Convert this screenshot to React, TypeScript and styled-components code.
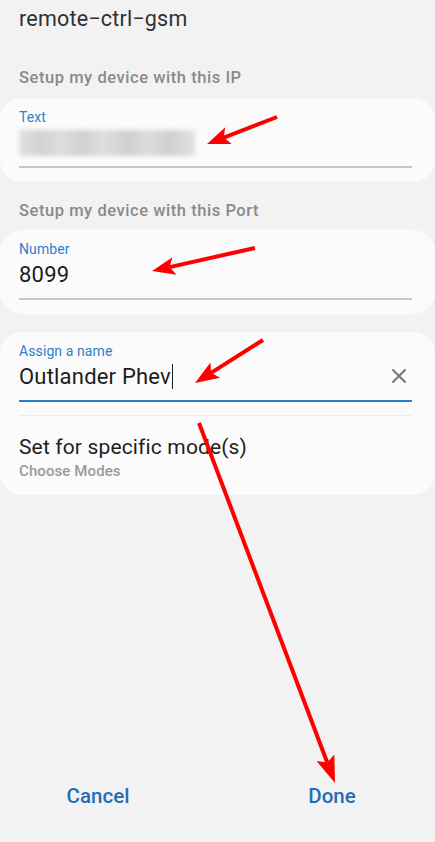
import React from "react";
import styled, { createGlobalStyle } from "styled-components";

const Global = createGlobalStyle`
  html, body { margin: 0; padding: 0; background: #f2f2f2; }
  body { font-family: Roboto, "Noto Sans", "Liberation Sans", sans-serif; }
  * { box-sizing: border-box; }
`;

const Page = styled.div`
  position: relative;
  width: 435px;
  min-height: 842px;
  display: flex;
  flex-direction: column;
  background: #f2f2f2;
  overflow: hidden;
`;

const Title = styled.div`
  padding: 5px 19px 0;
  font-size: 21.5px;
  letter-spacing: 0.2px;
  line-height: 28px;
  color: #303030;
  font-weight: 400;
`;

const SectionLabel = styled.div<{ $top: number }>`
  margin-top: ${(p) => p.$top}px;
  padding: 0 19px;
  font-size: 16.5px;
  letter-spacing: 0.55px;
  line-height: 20px;
  font-weight: 500;
  color: #8a8a8a;
`;

const Card = styled.div<{ $top: number }>`
  margin-top: ${(p) => p.$top}px;
  background: #fbfbfb;
  border-radius: 22px;
  padding: 10px 23px 14px 19px;
  display: flex;
  flex-direction: column;
`;

const FieldLabel = styled.div`
  font-size: 14px;
  letter-spacing: 0.1px;
  line-height: 18px;
  color: #2f7fc9;
`;

const ValueRow = styled.div`
  display: flex;
  align-items: center;
  height: 32px;
  font-size: 22px;
  letter-spacing: 0.2px;
  color: #1c1c1c;
`;

const Value = styled.span`
  flex: 1;
  display: flex;
  align-items: center;
`;

const Blurred = styled.span`
  display: block;
  width: 176px;
  height: 26px;
  margin-top: 2px;
  background: linear-gradient(
    90deg,
    #e0e0e0 0%, #d2d2d2 12%, #dddddd 24%, #d0d0d0 36%, #dedede 48%,
    #cfcfcf 62%, #dcdcdc 74%, #d0d0d0 86%, #e2e2e2 100%
  );
  filter: blur(2px);
`;

const Caret = styled.span`
  display: inline-block;
  width: 1.5px;
  height: 25px;
  margin-left: 1px;
  background: #222;
`;

const Underline = styled.div<{ $active?: boolean }>`
  margin-top: 8px;
  height: 2px;
  background: ${(p) => (p.$active ? "#2b7dc9" : "#c6c6c6")};
`;

const Divider = styled.div`
  margin-top: 13px;
  height: 1px;
  background: #ececec;
`;

const OptionTitle = styled.div`
  margin-top: 18px;
  font-size: 21px;
  letter-spacing: 0.15px;
  line-height: 26px;
  color: #1e1e1e;
`;

const OptionSub = styled.div`
  margin-top: 1px;
  font-size: 15px;
  letter-spacing: 0.1px;
  line-height: 20px;
  font-weight: 500;
  color: #9a9a9a;
`;

const ClearButton = styled.span`
  width: 24px;
  height: 24px;
  display: flex;
  align-items: center;
  justify-content: center;
  margin-right: 1px;
`;

const Footer = styled.div`
  margin-top: auto;
  padding-bottom: 34px;
  display: grid;
  grid-template-columns: 196px 196px;
  column-gap: 38px;
`;

const FooterButton = styled.div`
  text-align: center;
  font-size: 20.5px;
  line-height: 24px;
  font-weight: 500;
  color: #1f6fb8;
`;

const Overlay = styled.svg`
  position: absolute;
  left: 0;
  top: 0;
  width: 435px;
  height: 842px;
  pointer-events: none;
`;

type ArrowDef = { x1: number; y1: number; x2: number; y2: number; len: number; half: number };

const arrows: ArrowDef[] = [
  { x1: 277, y1: 117, x2: 207, y2: 144, len: 23, half: 9 },
  { x1: 255, y1: 248, x2: 152, y2: 271, len: 23, half: 9 },
  { x1: 263, y1: 340, x2: 195, y2: 383, len: 24, half: 9 },
  { x1: 199, y1: 423, x2: 335, y2: 783, len: 27, half: 9.5 },
];

function Arrow({ a }: { a: ArrowDef }) {
  const dx = a.x2 - a.x1;
  const dy = a.y2 - a.y1;
  const L = Math.hypot(dx, dy);
  const ux = dx / L;
  const uy = dy / L;
  const bx = a.x2 - ux * a.len;
  const by = a.y2 - uy * a.len;
  const px = -uy * a.half;
  const py = ux * a.half;
  const nx = a.x2 - ux * (a.len - 5);
  const ny = a.y2 - uy * (a.len - 5);
  const pts = `${a.x2},${a.y2} ${bx + px},${by + py} ${nx},${ny} ${bx - px},${by - py}`;
  return (
    <g>
      <line x1={a.x1} y1={a.y1} x2={nx} y2={ny} stroke="#ff0000" strokeWidth={4} />
      <polygon points={pts} fill="#ff0000" />
    </g>
  );
}

export default function App() {
  return (
    <>
      <Global />
      <Page>
        <Title>remote−ctrl−gsm</Title>

        <SectionLabel $top={35}>Setup my device with this IP</SectionLabel>
        <Card $top={10}>
          <FieldLabel>Text</FieldLabel>
          <ValueRow>
            <Value>
              <Blurred />
            </Value>
          </ValueRow>
          <Underline />
        </Card>

        <SectionLabel $top={19}>Setup my device with this Port</SectionLabel>
        <Card $top={9}>
          <FieldLabel>Number</FieldLabel>
          <ValueRow>
            <Value>8099</Value>
          </ValueRow>
          <Underline />
        </Card>

        <Card $top={18}>
          <FieldLabel>Assign a name</FieldLabel>
          <ValueRow>
            <Value>
              Outlander Phev
              <Caret />
            </Value>
            <ClearButton>
              <svg width="14" height="14" viewBox="0 0 14 14">
                <path d="M1 1 L13 13 M13 1 L1 13" stroke="#707070" strokeWidth="1.8" strokeLinecap="round" />
              </svg>
            </ClearButton>
          </ValueRow>
          <Underline $active />
          <Divider />
          <OptionTitle>Set for specific mode(s)</OptionTitle>
          <OptionSub>Choose Modes</OptionSub>
        </Card>

        <Footer>
          <FooterButton>Cancel</FooterButton>
          <FooterButton>Done</FooterButton>
        </Footer>

        <Overlay viewBox="0 0 435 842">
          {arrows.map((a, i) => (
            <Arrow key={i} a={a} />
          ))}
        </Overlay>
      </Page>
    </>
  );
}
